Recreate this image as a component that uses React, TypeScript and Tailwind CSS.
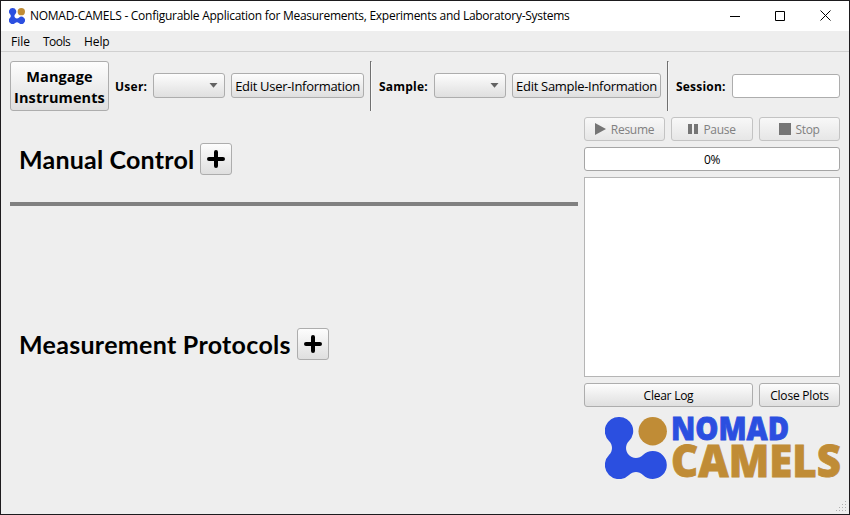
import React from "react";

const face = "rounded-[3px] border border-[#adadad] bg-gradient-to-b from-[#fdfdfd] to-[#dfdfdf]";

function Button({ className = "", children, disabled = false }: { className?: string; children?: React.ReactNode; disabled?: boolean }) {
  return (
    <button
      disabled={disabled}
      className={`flex shrink-0 items-center justify-center whitespace-nowrap ${
        disabled
          ? "rounded-[3px] border border-[#c3c3c3] bg-gradient-to-b from-[#f8f8f8] to-[#e6e6e6] text-[#808080]"
          : face
      } ${className}`}
    >
      {children}
    </button>
  );
}

function Combo() {
  return (
    <div className={`mb-px flex h-[25px] w-[72px] shrink-0 items-center justify-end pr-[6px] ${face}`}>
      <svg width="9" height="5" viewBox="0 0 9 5"><path d="M0.5 0h8L4.5 4.8z" fill="#626262" /></svg>
    </div>
  );
}

function Divider() {
  return <div className="h-[50px] w-[2px] shrink-0 border-l border-t border-[#707070] border-r border-r-[#f8f8f8]" />;
}

function Molecule({ size }: { size: number }) {
  return (
    <svg width={size} height={size} viewBox="0 0 62 62" className="shrink-0">
      <path
        fill="#2b4fe0"
        d="M14 0A14 14 0 0 1 24 24C20.5 27.5 20 33 23 37C27 42 34 42 38 38A14 14 0 1 1 38 58C34 54 28 54 24 58A14 14 0 1 1 4 38C8 34 8 28 4 24A14 14 0 0 1 14 0Z"
      />
      <circle cx="47.7" cy="14.2" r="14.2" fill="#c08c36" />
    </svg>
  );
}

function AddButton() {
  return (
    <Button className="h-8 w-8">
      <svg width="20" height="20" viewBox="0 0 20 20"><path d="M10 3v14M3 10h14" stroke="black" strokeWidth="4" strokeLinecap="round" /></svg>
    </Button>
  );
}

const grip = [[9, 0], [6, 3], [9, 3], [3, 6], [6, 6], [9, 6], [0, 9], [3, 9], [6, 9], [9, 9]];

export default function App() {
  return (
    <div className="relative flex h-[515px] w-[850px] flex-col overflow-hidden border border-[#1d1b1e] bg-[#eeeeee] font-['Open_Sans','Noto_Sans',sans-serif] text-[12px] leading-4 text-black">
      <header className="flex h-[30px] shrink-0 items-center bg-white pl-2">
        <Molecule size={16} />
        <span className="ml-[5px] whitespace-nowrap tracking-[-0.27px]">NOMAD-CAMELS - Configurable Application for Measurements, Experiments and Laboratory-Systems</span>
        <div className="ml-auto flex items-center gap-[35px] pb-px pr-[18px]">
          <svg width="10" height="10"><path d="M0 5.5h10" stroke="black" /></svg>
          <svg width="10" height="10"><path d="M.5.5h9v9h-9z" fill="none" stroke="black" /></svg>
          <svg width="11" height="11"><path d="M.5.5l10 10M10.5.5l-10 10" stroke="black" /></svg>
        </div>
      </header>
      <nav className="flex h-[21px] shrink-0 items-center gap-[14px] border-b border-[#d0d0d0] pl-[10px] pt-[2px]">
        <span className="w-[18px]">File</span>
        <span className="w-[27px] tracking-[-0.5px]">Tools</span>
        <span className="tracking-[-0.1px]">Help</span>
      </nav>
      <section className="mt-[9px] flex h-[50px] shrink-0 items-center pl-[9px]">
        <Button className="h-[50px] w-[99px] pt-px text-center text-[14.5px] font-bold leading-[21px] tracking-[0.1px]"><span>Mangage<br />Instruments</span></Button>
        <b className="ml-[6px] w-[38px] pt-[2px] tracking-[0.25px]">User:</b>
        <Combo />
        <Button className="mb-px ml-[6px] h-[25px] w-[133px] text-[13px] tracking-[-0.3px]">Edit User-Information</Button>
        <div className="ml-[6px]"><Divider /></div>
        <b className="ml-[7px] w-[55px] pt-[2px] tracking-[0.2px]">Sample:</b>
        <Combo />
        <Button className="mb-px ml-[6px] h-[25px] w-[149px] text-[13px] tracking-[-0.3px]">Edit Sample-Information</Button>
        <div className="ml-[6px]"><Divider /></div>
        <b className="ml-[7px] w-[56px] pt-[2px] tracking-[0.2px]">Session:</b>
        <input aria-label="Session" className="h-6 w-[108px] rounded-[3px] border border-[#adadad] bg-white" />
      </section>
      <main className="flex flex-1 pl-[9px] pt-[6px]">
        <section className="w-[568px] font-['Lato','Open_Sans',sans-serif] text-[25px] font-bold">
          <div className="flex h-[58px] items-end pl-[9px]">
            <h1 className="w-[181px] whitespace-nowrap leading-[31px] tracking-[0.2px]">Manual Control</h1>
            <AddButton />
          </div>
          <div className="mt-[27px] h-1 bg-[#808080]" />
          <div className="mt-[122px] flex h-8 items-end pl-[9px]">
            <h1 className="w-[278px] whitespace-nowrap leading-[31px] tracking-[0.3px]">Measurement Protocols</h1>
            <AddButton />
          </div>
        </section>
        <aside className="ml-[6px] flex w-[256px] flex-col gap-[6px]">
          <div className="flex gap-[6px]">
            <Button disabled className="h-6 w-[81px] gap-[5px] tracking-[-0.3px]"><svg width="11" height="12"><path d="M0 0l11 6-11 6z" fill="#757575" /></svg><span className="pt-[2px]">Resume</span></Button>
            <Button disabled className="h-6 w-[82px] gap-[5px] tracking-[-0.3px]"><svg width="10" height="10"><path d="M0 0h4v10H0zM6 0h4v10H6z" fill="#757575" /></svg><span className="pt-[2px]">Pause</span></Button>
            <Button disabled className="h-6 w-[81px] gap-1 tracking-[-0.3px]"><svg width="12" height="12"><path d="M0 0h12v12H0z" fill="#757575" /></svg><span className="pt-[2px]">Stop</span></Button>
          </div>
          <div className="flex h-6 items-center justify-center rounded-[3px] border border-[#a5a5a5] bg-white pt-[2px] tracking-[-0.3px]">0%</div>
          <div className="h-[200px] border border-[#b5b5b5] bg-white" />
          <div className="flex gap-[6px]">
            <Button className="h-6 w-[169px] pt-[2px] tracking-[-0.25px]">Clear Log</Button>
            <Button className="h-6 w-[81px] pt-[2px] tracking-[-0.2px]">Close Plots</Button>
          </div>
          <div className="mt-1 flex gap-[5px] pl-[21px]">
            <Molecule size={62} />
            <svg width="170" height="64" viewBox="0 0 170 64" className="shrink-0 overflow-visible" fontFamily="'Open Sans', sans-serif" fontWeight="800">
              <text x="-1" y="23" fontSize="31" textLength="118" lengthAdjust="spacingAndGlyphs" fill="#2b4fe0" stroke="#2b4fe0" strokeWidth=".8">NOMAD</text>
              <text x="-1" y="59.5" fontSize="43.5" textLength="170" lengthAdjust="spacingAndGlyphs" fill="#c08c36" stroke="#c08c36" strokeWidth=".8">CAMELS</text>
            </svg>
          </div>
        </aside>
      </main>
      <svg className="absolute bottom-[2px] right-[2px]" width="11" height="11">
        {grip.map(([x, y]) => <rect key={`${x}-${y}`} x={x} y={y} width="1" height="1" fill="#b0b0b0" />)}
      </svg>
    </div>
  );
}
